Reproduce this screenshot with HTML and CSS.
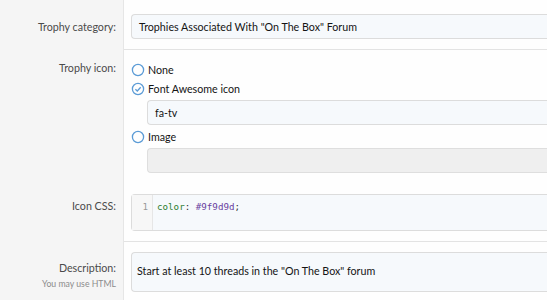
FILE: index.html
```html
<!DOCTYPE html>
<html>
<head>
<meta charset="utf-8">
<link rel="stylesheet" href="styles.css">
</head>
<body>
<div class="form">
  <div class="row first">
    <div class="label"><span>Trophy category:</span></div>
    <div class="field sep">
      <div class="input">Trophies Associated With "On The Box" Forum</div>
    </div>
  </div>
  <div class="row r2">
    <div class="label"><span>Trophy icon:</span></div>
    <div class="field">
      <div class="radio">
        <svg class="ico" viewBox="0 0 14 14" width="14" height="14"><circle cx="7" cy="7" r="5.6" fill="none" stroke="#5b9bd6" stroke-width="1.3"/></svg>
        <span>None</span>
      </div>
      <div class="radio">
        <svg class="ico" viewBox="0 0 14 14" width="14" height="14"><circle cx="7" cy="7" r="5.6" fill="none" stroke="#5b9bd6" stroke-width="1.3"/><path d="M4.4 7.2 L6.3 9 L9.7 5.3" fill="none" stroke="#5b9bd6" stroke-width="1.3"/></svg>
        <span>Font Awesome icon</span>
      </div>
      <div class="input sub">fa-tv</div>
      <div class="radio">
        <svg class="ico" viewBox="0 0 14 14" width="14" height="14"><circle cx="7" cy="7" r="5.6" fill="none" stroke="#5b9bd6" stroke-width="1.3"/></svg>
        <span>Image</span>
      </div>
      <div class="input sub disabled"></div>
    </div>
  </div>
  <div class="row r3">
    <div class="label"><span>Icon CSS:</span></div>
    <div class="field sep">
      <div class="code">
        <div class="gutter">1</div>
        <div class="lines"><span class="prop">color</span><span class="punc">:</span> <span class="val">#9f9d9d</span><span class="punc">;</span></div>
      </div>
    </div>
  </div>
  <div class="row r4">
    <div class="label"><span>Description:</span><span class="hint">You may use HTML</span></div>
    <div class="field">
      <div class="textarea">Start at least 10 threads in the "On The Box" forum</div>
      <div class="explain">Optionally describe the trophy and the criteria the user needs to meet to be awarded it.</div>
    </div>
  </div>
</div>
</body>
</html>
```
FILE: styles.css
```css
html, body {
  margin: 0;
  padding: 0;
  background: #fefefe;
  font-family: Lato, "Open Sans", sans-serif;
  font-size: 10.7px;
  color: #141414;
  overflow: hidden;
}
.form {
  width: 547px;
  height: 300px;
  overflow: hidden;
}
.row {
  display: flex;
}
.label {
  width: 116px;
  flex: none;
  padding-right: 7px;
  background: #f5f5f5;
  border-right: 1px solid #e6e6e6;
  display: flex;
  flex-direction: column;
  align-items: flex-end;
  color: #4a4a4a;
  line-height: 16px;
}
.field {
  flex: 1;
  padding-left: 7px;
  min-width: 0;
}
.sep {
  border-bottom: 1px solid #e3e3e3;
}
.first .label span { margin-top: 19px; }
.first .field { padding-top: 14px; padding-bottom: 10px; }
.input {
  height: 23px;
  border: 1px solid #dcdcdc;
  border-right: none;
  border-radius: 4px 0 0 4px;
  background: #f6f9fc;
  padding-left: 7px;
  line-height: 23px;
  white-space: nowrap;
}
.r2 .label span { margin-top: 10px; }
.r2 .field { padding-top: 10px; padding-bottom: 11px; }
.radio {
  display: flex;
  align-items: center;
  height: 19px;
  gap: 3px;
}
.ico { flex: none; }
.input.sub {
  margin-left: 16px;
  margin-top: 2px;
  margin-bottom: 2px;
}
.input.disabled {
  background: #efefef;
  border-color: #dedede;
}
.r3 .label span { margin-top: 12px; }
.r3 .field { padding-top: 8px; padding-bottom: 10px; }
.code {
  display: flex;
  height: 35px;
  border: 1px solid #dcdcdc;
  border-right: none;
  border-radius: 4px 0 0 4px;
  background: #f6f9fc;
  font-family: "DejaVu Sans Mono", "Liberation Mono", monospace;
  font-size: 9.2px;
  line-height: 12px;
}
.gutter {
  width: 16px;
  padding-right: 4px;
  text-align: right;
  color: #999;
  background: #f7f7f7;
  border-right: 1px solid #e6e6e6;
  padding-top: 6px;
}
.lines {
  padding-left: 4px;
  padding-top: 6px;
}
.prop { color: #2f7f2f; }
.punc { color: #333; }
.val { color: #6a3fa0; }
.r4 .label span:first-child { margin-top: 18px; }
.r4 .field { padding-top: 10px; }
.hint {
  font-size: 8.7px;
  color: #8c8c8c;
  margin-top: 0;
}
.textarea {
  border: 1px solid #dcdcdc;
  border-right: none;
  border-radius: 4px 0 0 4px;
  background: #f6f9fc;
  padding: 10px 5px 0;
  box-sizing: border-box;
  height: 40px;
  line-height: 16px;
  white-space: nowrap;
}
.explain {
  font-size: 9px;
  color: #8c8c8c;
  margin-top: 8px;
  white-space: nowrap;
}
```
